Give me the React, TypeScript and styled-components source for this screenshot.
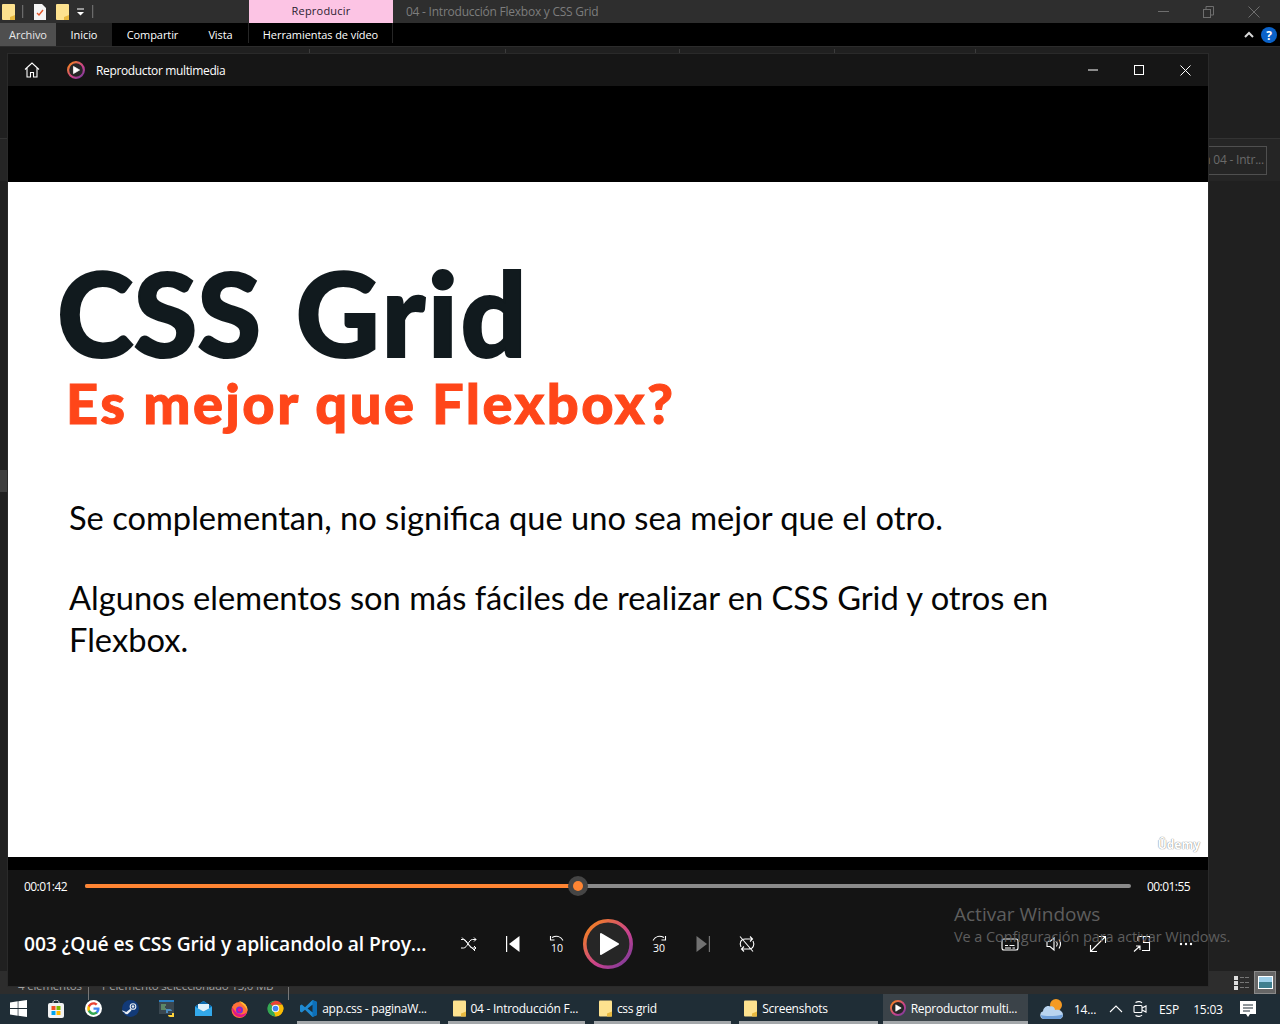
import React from "react";
import styled, { createGlobalStyle } from "styled-components";

const Global = createGlobalStyle`
  html, body { margin: 0; padding: 0; background: #1f1f1f; }
  * { box-sizing: border-box; }
  svg { display: block; flex: none; }
`;

const ui = `"Open Sans", "Noto Sans", "Liberation Sans", sans-serif`;
const slide = `Lato, "Open Sans", sans-serif`;

const Screen = styled.div`
  position: relative; width: 1280px; height: 1024px; overflow: hidden;
  display: flex; flex-direction: column; font-family: ${ui}; font-size: 12px; color: #fff;
`;
const Explorer = styled.div`flex: 1; min-height: 0; display: flex; flex-direction: column; background: #202020;`;

const TitleBar = styled.div`height: 23px; display: flex; align-items: center; background: #2e2e2e;`;
const Qat = styled.div`width: 249px; height: 23px; display: flex; align-items: center; padding-left: 2px;`;
const QatIcon = styled.span<{ $w: number; $pl?: number }>`width: ${p => p.$w}px; padding-left: ${p => p.$pl ?? 0}px; display: flex; align-items: center; justify-content: flex-start; flex: none;`;
const QatSep = styled.span<{ $ml: number; $mr: number }>`width: 2px; height: 13px; margin: 0 ${p => p.$mr}px 0 ${p => p.$ml}px; background: #6a6a6a; border-right: 1px solid #3d3d3d;`;
const ContextTab = styled.div`width: 144px; height: 23px; padding-bottom: 3px; display: flex; align-items: center; justify-content: center; background: #fcc4e4; color: #2a2230; font-size: 11px; letter-spacing: .2px;`;
const WindowTitle = styled.div`flex: 1; padding: 0 0 0 13px; color: #7d7d7d; font-size: 12px; letter-spacing: -.24px;`;
const CaptionButtons = styled.div`display: flex; padding-right: 3px;`;
const CaptionButton = styled.span`width: 45.5px; display: flex; justify-content: center;`;

const Ribbon = styled.div`height: 23px; display: flex; align-items: stretch; background: #000; font-size: 11px;`;
const RibbonTab = styled.div<{ $w: number; $bg?: string; $sep?: boolean }>`
  width: ${p => p.$w}px; display: flex; align-items: center; justify-content: center; letter-spacing: -.08px;
  background: ${p => p.$bg ?? "transparent"}; color: ${p => p.$bg === "#4f4f4f" ? "#e8e8e8" : "#fff"};
  ${p => p.$sep ? "border-right: 1px solid #262626; margin-bottom: 3px; padding-top: 3px;" : ""}
`;
const RibbonEnd = styled.div`margin-left: auto; display: flex; align-items: center; gap: 7px; padding-right: 3px;`;

const Ruler = styled.div`height: 8px; display: flex; padding-top: 2px; border-top: 1px solid #2c2c2c; background: #202020;`;
const RulerCell = styled.span<{ $w: number }>`width: ${p => p.$w}px; height: 5px; border-right: 1px solid #3c3c3c;`;

const ExplorerBody = styled.div`flex: 1; min-height: 0; padding-top: 84px; display: flex; flex-direction: column; align-items: stretch;`;
const PreviewHeader = styled.div`height: 43px; display: flex; align-items: center; justify-content: flex-end; padding-right: 13px; background: #252525; border-top: 1px solid #333;`;
const PreviewBox = styled.div`height: 29px; width: 200px; display: flex; align-items: center; justify-content: flex-end; padding: 0 2px 2px 0; border: 1px solid #4f4f4f; color: #6a6a6a; font-size: 12px; letter-spacing: -.2px; white-space: nowrap;`;
const Sash = styled.span`position: absolute; left: 0; top: 470px; width: 8px; height: 22px; background: #3e3e3e;`;

const StatusBar = styled.div`height: 23px; display: flex; align-items: center; padding: 0 4px 0 18px; background: #2d2d2d; color: #a0a0a0; font-size: 11.5px; position: relative;`;
const StatusText = styled.span<{ $w: number }>`width: ${p => p.$w}px; padding-top: 6px; letter-spacing: -.2px; white-space: nowrap;`;
const StatusSep = styled.span`width: 1px; height: 23px; margin-top: 12px; margin-right: 11px; background: #777;`;
const ViewButtons = styled.div`margin-left: auto; display: flex; align-items: center; height: 23px; gap: 1px;`;
const ViewButton = styled.span<{ $on?: boolean }>`width: 22px; height: 23px; display: flex; align-items: center; justify-content: center; ${p => p.$on ? "background:#666; border: 1px solid #8a8a8a;" : ""}`;

const Taskbar = styled.div`height: 30px; display: flex; align-items: stretch; background: #1f2d36;`;
const TaskIcon = styled.span<{ $w?: number }>`width: ${p => p.$w ?? 36.6}px; display: flex; align-items: center; justify-content: center; padding-bottom: 1px;`;
const TaskItem = styled.div<{ $w: number; $ml?: number; $pl?: number; $active?: boolean }>`
  width: ${p => p.$w}px; margin-left: ${p => p.$ml ?? 8}px; display: flex; align-items: center; gap: 5px; padding: 1px 0 0 ${p => p.$pl ?? 5}px;
  border-bottom: 3px solid #a3a7aa; font-size: 12px; letter-spacing: -.27px; white-space: nowrap; color: #fff;
  ${p => p.$active ? "background: #3b4349;" : ""}
`;
const Tray = styled.div`margin-left: auto; display: flex; align-items: center; font-size: 12px; letter-spacing: -.2px;`;
const TraySlot = styled.span<{ $w: number; $pl?: number }>`width: ${p => p.$w}px; padding-left: ${p => p.$pl ?? 0}px; display: flex; align-items: center; justify-content: center;`;

const PlayerWindow = styled.section`
  position: absolute; left: 8px; top: 54px; width: 1200px; height: 932px; display: flex; flex-direction: column;
  background: #141414; box-shadow: 0 0 0 1px #2a2a2a;
`;
const PlayerTitle = styled.header`height: 32px; display: flex; align-items: center; background: #161616; font-size: 12px; letter-spacing: -.36px;`;
const HomeCell = styled.span`width: 48px; display: flex; justify-content: center;`;
const LogoCell = styled.span`width: 40px; display: flex; justify-content: center;`;
const PlayerName = styled.span`flex: 1;`;
const PlayerCaption = styled.span`width: 46px; display: flex; justify-content: center;`;

const Video = styled.div`height: 784px; padding: 96px 0 13px; background: #000;`;
const Slide = styled.article`position: relative; height: 675px; padding: 76px 0 0 49px; background: #fff; font-family: ${slide}; color: #000;`;
const SlideTitle = styled.h1`margin: 0; height: 110px; font: 900 116px/110px ${slide}; color: #111a1e; letter-spacing: 0; word-spacing: 7px; -webkit-text-stroke: 2px #111a1e;`;
const TitleWord = styled.span`letter-spacing: 2.5px;`;
const SlideSub = styled.h2`margin: 1px 0 0 9px; font: 900 56px/68px ${slide}; color: #ff4619; letter-spacing: 2.45px; -webkit-text-stroke: 1px #ff4619;`;
const SlideText = styled.p`margin: 0 0 38px 12px; width: 1010px; font: 400 32.65px/42px ${slide}; color: #050505;`;
const SlideBody = styled.div`margin-top: 60px;`;
const Udemy = styled.span`position: absolute; right: 8px; bottom: 4px; font: 700 12px "Open Sans", sans-serif; color: #fff; text-shadow: 0 0 1px #8a8a8a, 0 0 1px #8a8a8a;`;

const Controls = styled.footer`flex: 1; display: flex; flex-direction: column;`;
const SeekRow = styled.div`height: 32px; display: flex; align-items: center; padding: 0 17px 0 16px; gap: 17px; font-size: 12px; letter-spacing: -.55px;`;
const Time = styled.span`width: 44px; white-space: nowrap;`;
const Track = styled.div`position: relative; flex: 1; height: 4px; margin-right: -1px; border-radius: 2px; background: #8a8a8a;`;
const TrackFill = styled.div`height: 4px; border-radius: 2px; background: #ff8533;`;
const Thumb = styled.span`position: absolute; top: -8px; margin-left: -10px; width: 20px; height: 20px; border-radius: 50%; background: #454545; display: flex; align-items: center; justify-content: center;`;
const ThumbDot = styled.span`width: 10px; height: 10px; border-radius: 50%; background: #ff8533;`;
const ButtonRow = styled.div`flex: 1; display: flex; align-items: center; padding-left: 16px;`;
const TrackName = styled.div`width: 423px; font-size: 19.3px; font-weight: 600; letter-spacing: -.1px; white-space: nowrap; padding-bottom: 1px;`;
const Transport = styled.div`display: flex; align-items: center;`;
const IconButton = styled.span<{ $off?: boolean }>`width: 44px; height: 44px; display: flex; align-items: center; justify-content: center; opacity: ${p => p.$off ? .4 : 1};`;
const PlayButton = styled.span`width: 58px; height: 58px; display: flex; align-items: center; justify-content: center;`;
const Extras = styled.div`margin-left: auto; display: flex; align-items: center;`;

const Watermark = styled.aside`position: absolute; left: 954px; top: 902px; color: #5e5e5e; white-space: nowrap; pointer-events: none; font-family: ${ui};`;
const WatermarkTitle = styled.div`font-size: 19px; line-height: 25px; letter-spacing: 0;`;
const WatermarkSub = styled.div`font-size: 14.5px; line-height: 20px; letter-spacing: -.08px;`;

const S = { fill: "none", stroke: "#fff", strokeWidth: 1.1 } as const;

const Folder = ({ w = 13, h = 16 }: { w?: number; h?: number }) => (
  <svg width={w} height={h} viewBox="0 0 13 16"><rect x="0" y="0" width="13" height="16" rx="1" fill="#fde28f" /><path d="M13 11v5H8v-3z" fill="#e8b93f" /></svg>
);
const Doc = () => (
  <svg width="12" height="16" viewBox="0 0 12 16"><path d="M0 0h8l4 4v12H0z" fill="#f5f5f5" /><path d="M3 9l2 2 4-5" fill="none" stroke="#e2572b" strokeWidth="1.4" /></svg>
);
const Ring = ({ id, size, sw = 3.6 }: { id: string; size: number; sw?: number }) => (
  <svg width={size} height={size} viewBox="0 0 50 50">
    <defs><linearGradient id={id} x1="0" y1="0" x2="1" y2="1"><stop offset="0" stopColor="#f98a12" /><stop offset=".6" stopColor="#c9418f" /><stop offset="1" stopColor="#6e3a9c" /></linearGradient></defs>
    <circle cx="25" cy="25" r={25 - sw / 2} fill="#262626" stroke={`url(#${id})`} strokeWidth={sw} />
    <path d="M18 15l17 10-17 10z" fill="#fff" stroke="#fff" strokeWidth="2" strokeLinejoin="round" />
  </svg>
);
const Shuffle = () => (
  <svg width="18" height="18" viewBox="0 0 18 18" {...S} strokeWidth="1"><path d="M1 4.500h2.500c4 0 5 8.500 9 8.500H16M1 13h2.500c4 0 5-8.500 9-8.500H16M14 2.500l2 2-2 2M14 11l2 2-2 2M2 2.500l13 13.500" /></svg>
);
const Prev = () => (
  <svg width="16" height="16" viewBox="0 0 16 16"><rect x="1" y="0" width="1.200" height="16" fill="#fff" /><path d="M14.500 0v16L4 8z" fill="#fff" /></svg>
);
const Next = () => (
  <svg width="16" height="16" viewBox="0 0 16 16"><rect x="13.800" y="0" width="1.200" height="16" fill="#fff" /><path d="M1.500 0v16L12 8z" fill="#fff" /></svg>
);
const Skip = ({ label, back }: { label: string; back?: boolean }) => (
  <svg width="20" height="20" viewBox="0 0 20 20">
    <g {...S} transform={back ? undefined : "matrix(-1 0 0 1 20 0)"}><path d="M5 3.500C9 1.500 13.500 2 16 6.500M3.500 2v4h4" /></g>
    <text x="10" y="17.500" textAnchor="middle" fill="#fff" fontFamily="Open Sans, sans-serif" fontSize="10.500">{label}</text>
  </svg>
);
const Repeat = () => (
  <svg width="18" height="18" viewBox="0 0 18 18" {...S}><path d="M3 12C1 8 3 4 7 4h7M12 1.500L14.500 4 12 6.500M15 6c2 4 0 8-4 8H4M6 11.500L3.500 14 6 16.500M2 1.500l13 15" /></svg>
);
const Captions = () => (
  <svg width="18" height="15" viewBox="0 0 18 15" {...S}><rect x="1" y="2" width="16" height="11" rx="2" /><path d="M4 8.500h3M8.500 8.500h5M4 11h6M11.500 11h2.500" /></svg>
);
const Volume = () => (
  <svg width="18" height="16" viewBox="0 0 18 16" {...S}><path d="M2 5.500h3L9 2v12l-4-3.500H2zM11.500 5.500c1 1.500 1 3.500 0 5M14 3.500c2 3 2 6 0 9" /></svg>
);
const Expand = () => (
  <svg width="18" height="18" viewBox="0 0 18 18" {...S}><path d="M1.500 16.500l15-15M10 1.500h6.500V8M1.500 10v6.500H8" /></svg>
);
const Mini = () => (
  <svg width="18" height="18" viewBox="0 0 18 18" {...S}><path d="M5 1.500h11.500v14H9M5 1.500V6M1 16.500L7 11M3 11h4v4M10.500 1.500v6h6" /></svg>
);
const More = () => (
  <svg width="14" height="4" viewBox="0 0 14 4" fill="#fff"><circle cx="2" cy="2" r="1.200" /><circle cx="7" cy="2" r="1.200" /><circle cx="12" cy="2" r="1.200" /></svg>
);
const WinLogo = () => (
  <svg width="17" height="17" viewBox="0 0 17 17" fill="#fff"><path d="M0 2.400l7.700-1.100v6.800H0zM8.400 1.200L17 0v8.100H8.400zM0 8.900h7.700v6.800L0 14.600zM8.400 8.900H17V17l-8.600-1.200z" /></svg>
);
const Store = () => (
  <svg width="16" height="18" viewBox="0 0 16 18"><path d="M5 4V2.500C5 1 6.500 0 8 0s3 1 3 2.500V4" fill="none" stroke="#e6e6e6" /><rect y="3" width="16" height="15" rx="2" fill="#f2f2f2" /><rect x="3.500" y="6" width="4" height="4" fill="#f25022" /><rect x="8.500" y="6" width="4" height="4" fill="#7fba00" /><rect x="3.500" y="11" width="4" height="4" fill="#00a4ef" /><rect x="8.500" y="11" width="4" height="4" fill="#ffb900" /></svg>
);
const GoogleG = () => (
  <svg width="17" height="17" viewBox="0 0 48 48"><circle cx="24" cy="24" r="24" fill="#fff" /><path d="M41 24.500c0-1.200-.1-2.300-.3-3.500H24v6.600h9.600c-.4 2.200-1.700 4.100-3.500 5.300v4.400h5.700c3.300-3.100 5.200-7.600 5.200-12.800z" fill="#4285f4" /><path d="M24 42c4.700 0 8.700-1.600 11.700-4.300l-5.700-4.400c-1.600 1.100-3.600 1.700-6 1.700-4.600 0-8.500-3.100-9.900-7.300H8.200v4.500C11.100 37.500 17.100 42 24 42z" fill="#34a853" /><path d="M14.100 27.700c-.7-2.200-.7-5.200 0-7.400v-4.500H8.200c-2.500 5-2.500 11.400 0 16.400z" fill="#fbbc05" /><path d="M24 13c2.600 0 4.900.9 6.700 2.600l5-5C32.700 7.800 28.700 6 24 6 17.100 6 11.100 10.500 8.200 15.800l5.900 4.500C15.500 16.100 19.400 13 24 13z" fill="#ea4335" /></svg>
);
const Steam = () => (
  <svg width="17" height="17" viewBox="0 0 17 17"><circle cx="8.500" cy="8.500" r="8.500" fill="#123a78" /><circle cx="11" cy="6.500" r="2.800" fill="none" stroke="#e8edf2" strokeWidth="1.100" /><circle cx="11" cy="6.500" r="1.300" fill="#e8edf2" /><path d="M.2 10.300l4 1.700 4.200-3.200 1 1.600-3.600 3.600c-1.500.6-3-.4-3.300-1.500L.6 11.500z" fill="#e8edf2" /></svg>
);
const Idle = () => (
  <svg width="16" height="17" viewBox="0 0 16 17"><rect x="0" y="0" width="15" height="14" fill="#3a4750" /><rect x="0" y="0" width="15" height="2" fill="#2a7fc4" /><path d="M2 5h5M2 7h4M2 9h5" stroke="#7ec87e" /><path d="M7 9h4c1 0 2 1 2 2H9v2H7z" fill="#4b8bbe" /><path d="M15 17h-4c-1 0-2-1-2-2h4v-2h2z" fill="#ffd43b" /></svg>
);
const Mail = () => (
  <svg width="17" height="15" viewBox="0 0 17 15"><path d="M0 5.500L8.500 0 17 5.500V15H0z" fill="#2ea6e8" /><path d="M0 5.500l8.500 5 8.500-5L8.500 0z" fill="#0c6bb0" /><path d="M3 3h11v4.500l-5.500 3L3 7.500z" fill="#dff1fb" /><path d="M0 6l8.500 5.500L17 6v9H0z" fill="#33a9eb" /></svg>
);
const Firefox = () => (
  <svg width="17" height="18" viewBox="0 0 17 18"><circle cx="8.500" cy="10" r="8" fill="#ff7139" /><path d="M8 1c5 1 9 5 8.500 10C15 7 12 5 8 1z" fill="#ffbd2e" /><path d="M1 7c0 5 3 10 8 10 4 0 6-2 7-5-2 2-5 3-8 2C5 13 3 10 1 7z" fill="#e31587" /><circle cx="8.500" cy="10" r="3.500" fill="#7b2fd1" /><circle cx="8.500" cy="10" r="1.700" fill="#f08" /></svg>
);
const Chrome = () => (
  <svg width="17" height="17" viewBox="0 0 48 48"><path d="M24 24L7.500 14C11.500 6.500 17.500 2 24 2c8 0 15 4 19 11H24z" fill="#ea4335" /><path d="M24 2A22 22 0 0 0 13.500 43.500L24 24 7.500 10z" fill="#34a853" /><path d="M43 13A22 22 0 0 1 13.500 43.500L24 24h19z" fill="#fbbc05" /><path d="M43 13H24l10 16-10.500 17A22 22 0 0 0 43 13z" fill="#fbbc05" /><path d="M7 10l10 17L24 46A22 22 0 0 1 7 10z" fill="#34a853" /><circle cx="24" cy="24" r="10.500" fill="#fff" /><circle cx="24" cy="24" r="8" fill="#4285f4" /></svg>
);
const VsCode = () => (
  <svg width="17" height="17" viewBox="0 0 17 17"><path d="M12.500 0L17 2v13l-4.500 2L5 9.800 1.800 12.500 0 11.500v-6l1.800-1L5 7.200z" fill="#1f8ad2" /><path d="M12.500 0L17 2v13l-4.500 2zM12.500 4.500L7.500 8.500l5 4z" fill="#0d6fb8" /><path d="M12.500 4.800v7.400L7.700 8.500z" fill="#1f2d36" /></svg>
);
const Weather = () => (
  <svg width="24" height="22" viewBox="0 0 24 22"><circle cx="16" cy="7" r="6" fill="#f59a23" /><path d="M4 21a4 4 0 0 1-1-7.800C3.500 9.500 7 7 10 8.500c2-1 5 .5 5 3.500 4-1 8 1 8 5 0 2-1.500 4-3.500 4z" fill="#b9d4ef" /><path d="M1 17c4 1.500 14 1.500 22-.5-.5 2.500-2 4.500-3.500 4.500H4c-1.500 0-3-2-3-4z" fill="#6f9fd8" /></svg>
);
const Meet = () => (
  <svg width="16" height="18" viewBox="0 0 16 18" {...S}><rect x="2" y="5.500" width="8" height="7" rx="1" /><path d="M10 8l4-2v6l-4-2M3.500 2.500C6 1 9 1.500 10 3M3.500 15.500C6 17 9 16.500 10 15" /></svg>
);

const App = () => (
  <Screen>
    <Global />
    <Explorer>
      <TitleBar>
        <Qat>
          <QatIcon $w={13}><Folder /></QatIcon>
          <QatSep $ml={7} $mr={10} />
          <QatIcon $w={12}><Doc /></QatIcon>
          <QatIcon $w={23} $pl={10}><Folder /></QatIcon>
          <QatIcon $w={15} $pl={8}>
            <svg width="7" height="8" viewBox="0 0 7 8"><path d="M0 1h7" stroke="#fff" /><path d="M0 4h7L3.500 7.500z" fill="#fff" /></svg>
          </QatIcon>
          <QatSep $ml={8} $mr={0} />
        </Qat>
        <ContextTab>Reproducir</ContextTab>
        <WindowTitle>04 - Introducción Flexbox y CSS Grid</WindowTitle>
        <CaptionButtons>
          <CaptionButton><svg width="11" height="11" viewBox="0 0 11 11"><path d="M0 5.500h11" stroke="#6e6e6e" /></svg></CaptionButton>
          <CaptionButton><svg width="11" height="12" viewBox="0 0 11 12" fill="none" stroke="#6e6e6e"><rect x=".5" y="3.500" width="7" height="8" /><path d="M3 3V.5h7.500V9H8" /></svg></CaptionButton>
          <CaptionButton><svg width="12" height="12" viewBox="0 0 12 12"><path d="M.5.500l11 11M11.500.500l-11 11" stroke="#6e6e6e" /></svg></CaptionButton>
        </CaptionButtons>
      </TitleBar>
      <Ribbon>
        <RibbonTab $w={56} $bg="#4f4f4f">Archivo</RibbonTab>
        <RibbonTab $w={56} $bg="#202020">Inicio</RibbonTab>
        <RibbonTab $w={81}>Compartir</RibbonTab>
        <RibbonTab $w={56} $sep>Vista</RibbonTab>
        <RibbonTab $w={144} $sep>Herramientas de vídeo</RibbonTab>
        <RibbonEnd>
          <svg width="10" height="7" viewBox="0 0 10 7"><path d="M1 6l4-4 4 4" fill="none" stroke="#d8d8d8" strokeWidth="2" /></svg>
          <svg width="16" height="16" viewBox="0 0 16 16"><circle cx="8" cy="8" r="8" fill="#0a62c9" /><text x="8" y="12.500" textAnchor="middle" fontSize="12" fontWeight="700" fill="#fff" fontFamily="Open Sans, sans-serif">?</text></svg>
        </RibbonEnd>
      </Ribbon>
      <Ruler>
        <RulerCell $w={310} />
        <RulerCell $w={196} />
        <RulerCell $w={174} />
        <RulerCell $w={155} />
        <RulerCell $w={141} />
      </Ruler>
      <ExplorerBody>
        <PreviewHeader>
          <PreviewBox>Sesión 04 - Intr...</PreviewBox>
        </PreviewHeader>
      </ExplorerBody>
      <StatusBar>
        <StatusText $w={70}>4 elementos</StatusText>
        <StatusSep />
        <StatusText $w={188}>1 elemento seleccionado 13,0 MB</StatusText>
        <StatusSep />
        <ViewButtons>
          <ViewButton>
            <svg width="16" height="14" viewBox="0 0 16 14"><g fill="#ddd"><rect x="0" y="0" width="4" height="4" /><rect x="0" y="5" width="4" height="4" /><rect x="0" y="10" width="4" height="4" /></g><path d="M6 1.500h10M6 6.500h10M6 11.500h10" stroke="#777" strokeDasharray="4 1" /></svg>
          </ViewButton>
          <ViewButton $on>
            <svg width="15" height="13" viewBox="0 0 15 13"><rect width="15" height="13" fill="#fff" /><rect x="1" y="1" width="13" height="5" fill="#9fd0ea" /><rect x="1" y="6" width="13" height="6" fill="#3f7e8e" /></svg>
          </ViewButton>
        </ViewButtons>
      </StatusBar>
    </Explorer>
    <Taskbar>
      <TaskIcon $w={37}><WinLogo /></TaskIcon>
      <TaskIcon $w={39}><Store /></TaskIcon>
      <TaskIcon><GoogleG /></TaskIcon>
      <TaskIcon><Steam /></TaskIcon>
      <TaskIcon><Idle /></TaskIcon>
      <TaskIcon><Mail /></TaskIcon>
      <TaskIcon><Firefox /></TaskIcon>
      <TaskIcon><Chrome /></TaskIcon>
      <TaskItem $w={143} $ml={3} $pl={3}><VsCode />app.css - paginaW...</TaskItem>
      <TaskItem $w={138} $ml={8}><Folder w={13} h={17} />04 - Introducción F...</TaskItem>
      <TaskItem $w={138} $ml={9}><Folder w={13} h={17} />css grid</TaskItem>
      <TaskItem $w={139} $ml={8}><Folder w={13} h={17} />Screenshots</TaskItem>
      <TaskItem $w={146} $ml={5} $pl={7} $active><Ring id="ring-task" size={16} sw={6} />Reproductor multi...</TaskItem>
      <Tray>
        <TraySlot $w={44} $pl={4}><Weather /></TraySlot>
        <TraySlot $w={26}>14...</TraySlot>
        <TraySlot $w={36}><svg width="14" height="8" viewBox="0 0 14 8"><path d="M1 7l6-6 6 6" fill="none" stroke="#fff" strokeWidth="1.100" /></svg></TraySlot>
        <TraySlot $w={12}><Meet /></TraySlot>
        <TraySlot $w={46}>ESP</TraySlot>
        <TraySlot $w={32}>15:03</TraySlot>
        <TraySlot $w={47}><svg width="16" height="17" viewBox="0 0 16 17"><path d="M0 0h16v13h-6l-2 3-2-3H0z" fill="#fff" /><path d="M3 4h10M3 7h10M3 10h7" stroke="#1f2d36" /></svg></TraySlot>
        <TraySlot $w={9} />
      </Tray>
    </Taskbar>
    <Sash />
    <PlayerWindow>
      <PlayerTitle>
        <HomeCell><svg width="16" height="16" viewBox="0 0 16 16" {...S}><path d="M1 7.500L8 1l7 6.500M3 6v9h3.500v-4.500h3V15H13V6" /></svg></HomeCell>
        <LogoCell><Ring id="ring-title" size={18} sw={6} /></LogoCell>
        <PlayerName>Reproductor multimedia</PlayerName>
        <PlayerCaption><svg width="10" height="2" viewBox="0 0 10 2"><path d="M0 1h10" stroke="#fff" /></svg></PlayerCaption>
        <PlayerCaption><svg width="10" height="10" viewBox="0 0 10 10"><rect x=".5" y=".5" width="9" height="9" fill="none" stroke="#fff" /></svg></PlayerCaption>
        <PlayerCaption><svg width="11" height="11" viewBox="0 0 11 11"><path d="M.5.500l10 10M10.500.500l-10 10" stroke="#fff" /></svg></PlayerCaption>
      </PlayerTitle>
      <Video>
        <Slide>
          <SlideTitle>CSS <TitleWord>Grid</TitleWord></SlideTitle>
          <SlideSub>Es mejor que Flexbox?</SlideSub>
          <SlideBody>
            <SlideText>Se complementan, no significa que uno sea mejor que el otro.</SlideText>
            <SlideText>Algunos elementos son más fáciles de realizar en CSS Grid y otros en Flexbox.</SlideText>
          </SlideBody>
          <Udemy>Ûdemy</Udemy>
        </Slide>
      </Video>
      <Controls>
        <SeekRow>
          <Time>00:01:42</Time>
          <Track>
            <TrackFill style={{ width: `${(493 / 1046) * 100}%` }} />
            <Thumb style={{ left: `${(493 / 1046) * 100}%` }}><ThumbDot /></Thumb>
          </Track>
          <Time>00:01:55</Time>
        </SeekRow>
        <ButtonRow>
          <TrackName>003 ¿Qué es CSS Grid y aplicandolo al Proy...</TrackName>
          <Transport>
            <IconButton><Shuffle /></IconButton>
            <IconButton><Prev /></IconButton>
            <IconButton><Skip label="10" back /></IconButton>
            <PlayButton><Ring id="ring-play" size={50} /></PlayButton>
            <IconButton><Skip label="30" /></IconButton>
            <IconButton $off><Next /></IconButton>
            <IconButton><Repeat /></IconButton>
          </Transport>
          <Extras>
            <IconButton><Captions /></IconButton>
            <IconButton><Volume /></IconButton>
            <IconButton><Expand /></IconButton>
            <IconButton><Mini /></IconButton>
            <IconButton><More /></IconButton>
          </Extras>
        </ButtonRow>
      </Controls>
    </PlayerWindow>
    <Watermark>
      <WatermarkTitle>Activar Windows</WatermarkTitle>
      <WatermarkSub>Ve a Configuración para activar Windows.</WatermarkSub>
    </Watermark>
  </Screen>
);

export default App;
